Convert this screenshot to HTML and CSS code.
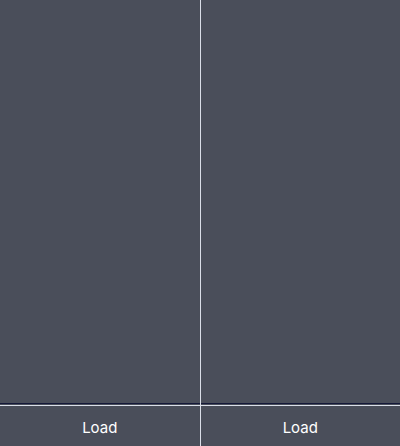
FILE: index.html
```html
<!DOCTYPE html>
<html>
<head>
<meta charset="utf-8">
<link rel="stylesheet" href="styles.css">
</head>
<body>
<div class="app">
  <div class="pane">
    <div class="canvas"></div>
    <div class="bar"><span class="load">Load</span></div>
  </div>
  <div class="divider"></div>
  <div class="pane">
    <div class="canvas"></div>
    <div class="bar"><span class="load">Load</span></div>
  </div>
</div>
</body>
</html>
```
FILE: styles.css
```css
html, body {
  margin: 0;
  padding: 0;
  background: #4a4e5a;
}
.app {
  display: flex;
  width: 400px;
  height: 446px;
  font-family: Inter, "Liberation Sans", sans-serif;
}
.pane {
  flex: 1;
  display: flex;
  flex-direction: column;
}
.divider {
  width: 1px;
  background: #dadee8;
}
.canvas {
  height: 403px;
  background: #4a4e5a;
  border-bottom: 1px solid #141838;
}
.bar {
  flex: 1;
  margin-top: 1px;
  border-top: 1px solid #dadee8;
  display: flex;
  align-items: center;
  justify-content: center;
  background: #4a4e5a;
}
.load {
  color: #ffffff;
  font-size: 15px;
  font-weight: 400;
  padding-top: 2px;
}
```
